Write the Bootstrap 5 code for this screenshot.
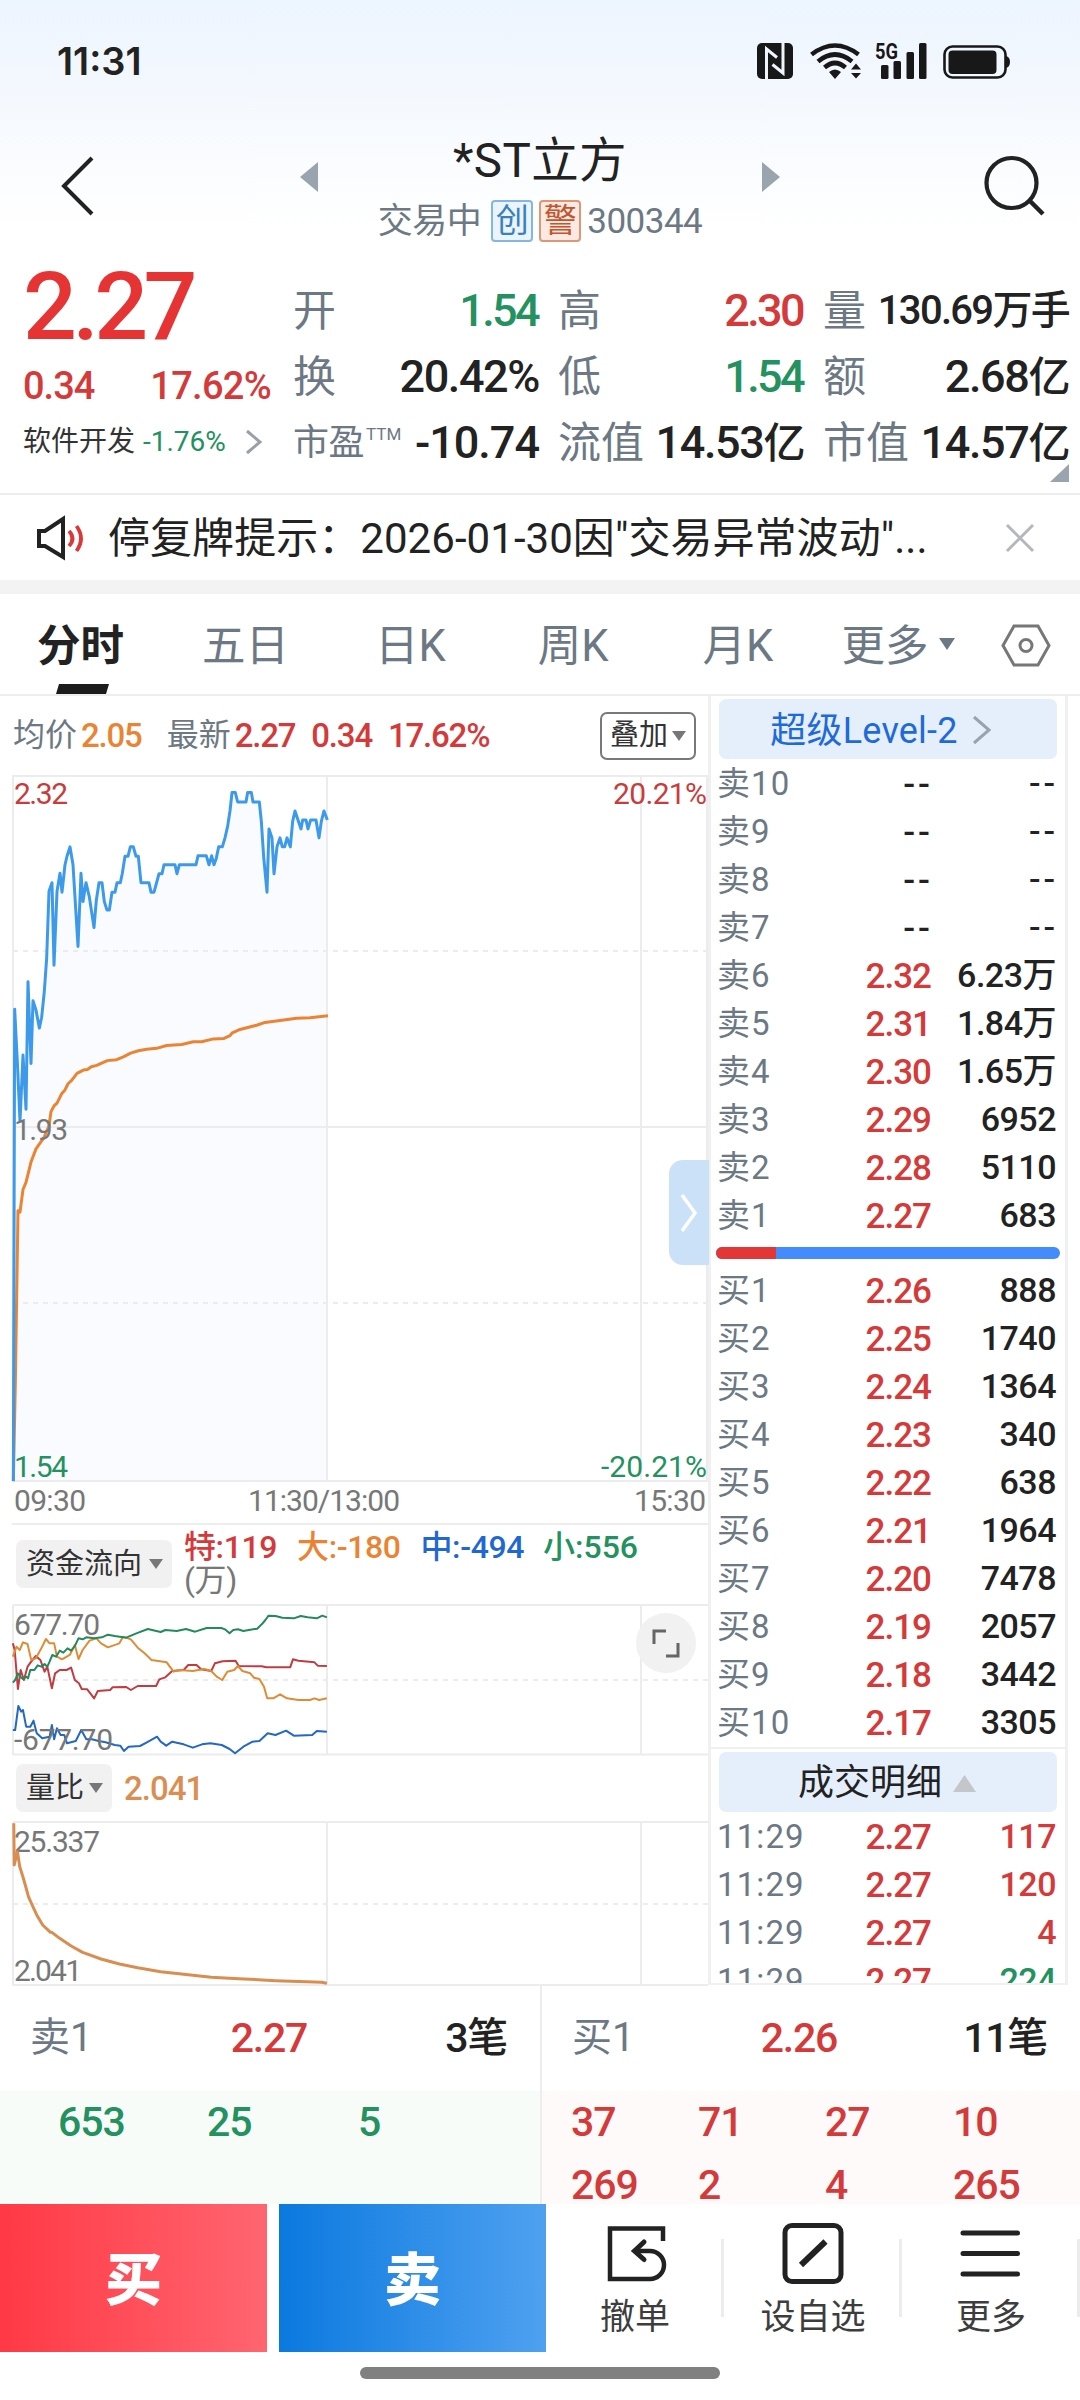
<!DOCTYPE html>
<html lang="zh-CN">
<head>
<meta charset="utf-8">
<title>*ST立方 300344</title>
<meta name="viewport" content="width=device-width, initial-scale=1">
<link href="https://cdn.jsdelivr.net/npm/bootstrap@5.3.0/dist/css/bootstrap.min.css" rel="stylesheet">
<script src="https://cdn.jsdelivr.net/npm/bootstrap@5.3.0/dist/js/bootstrap.bundle.min.js"></script>
<style>
:root{--up:#d43a3a;--down:#239160;--ink:#222;--mute:#6c7884;--line:#ededee}
body{width:1080px;height:2400px;margin:0;overflow:hidden;background:#fff;color:var(--ink);font-family:Roboto,"Noto Sans CJK SC",sans-serif;line-height:1;white-space:nowrap}
svg{display:block;flex:none;overflow:visible}
.up{color:var(--up)}.down{color:var(--down)}.mute{color:var(--mute)}
.num{font-weight:500}
.top-zone{height:260px;background:linear-gradient(#edf5ff,#f4f8fe 35%,#fff 88%)}
.status{height:122px;padding:0 69px 0 57px}
.clock{font:600 38px/123px Inter,Roboto,sans-serif;letter-spacing:0}
.title-bar{height:138px;padding:0 33px 0 60px}
.title-bar>svg{margin-top:33px}
.next-stock+svg{margin-left:203px}
.prev-stock{margin-left:204px}
.stock-name{font-size:47.5px;line-height:60px;margin-top:9px;letter-spacing:.4px}
.stock-sub{font-size:35px;height:44px;margin-top:8px;letter-spacing:-.5px}
.tagbox{width:42px;height:42px;border:2px solid;border-radius:4px;font-size:33px;line-height:37px;text-align:center;letter-spacing:0}
.tag-c{color:#3a80bb;border-color:#86b5dd;background:#e9f4fd;margin-left:10px}
.tag-w{color:#c2542e;border-color:#dc9678;background:#fce9e1;margin:0 6px 0 6px}
.quote{height:235px;border-bottom:2px solid var(--line);position:relative}
.q-left{width:293px;padding-left:23px}
.big{font-size:95px;height:92px;line-height:94px;color:#e63434;letter-spacing:-4.6px;font-weight:500}
.chg{font-size:38px;height:62px;line-height:69px;letter-spacing:-1px;padding-right:22px}
.chg span+span{letter-spacing:-.7px}
.sector{font-size:28px;height:50px;line-height:50px;margin-top:3px;color:#333}
.q-grid{display:grid;grid-template-columns:246px 246px 246px;column-gap:19px;grid-auto-rows:66px;padding-top:18px}
.q-grid>div{font-size:43px;line-height:66px;display:flex;justify-content:space-between}
.q-grid .num{font-size:45px;letter-spacing:-1.4px}
.q-grid .num.up,.q-grid .num.down{letter-spacing:-2.6px;margin-right:1px}
.q-grid .num b{font-weight:500;font-size:42px}
.q-grid .num.sm{font-size:40px;letter-spacing:-1.7px}
.q-grid .num.neg{letter-spacing:-1px}
.q-grid .pe{font-size:36px;letter-spacing:-.5px}
.q-grid .pe sup{font-size:17px;top:-.9em;margin-left:2px;letter-spacing:0}
.corner{position:absolute;right:11px;bottom:11px}
.notice{height:85px;padding-left:36px;font-size:42px}
.notice span{margin:2px 0 0 23px;letter-spacing:.05px}
.band{height:14px;background:#f3f3f4}
.tabs{height:102px;border-bottom:2px solid var(--line);font-size:43.5px;padding-left:37px;color:var(--mute)}
.tabs>*{line-height:105px}
.tab-on{color:var(--ink);font-weight:700;position:relative}
.tab-on svg{position:absolute;left:19px;bottom:0}
.t2{margin-left:78px}.t3{margin-left:86px}.t4{margin-left:92px}.t5{margin-left:94px}.t6{margin-left:68px}
.body-zone{height:1289px}
.chart-col{width:708px;padding-left:12px}
.avg{height:79px;font-size:32px;line-height:79px;padding-left:1px}
.avg .num{font-size:33px;letter-spacing:-1.2px}
.pick{border:2px solid #77797c;border-radius:7px;height:48px;width:96px;font-size:29px;color:#333;margin-right:12px}
.pick-gray{background:#f1f1f1;border-radius:7px;height:48px;font-size:29px;color:#333;margin-left:4px;padding:0 9px 0 10px}
.flow{height:81px;border-top:2px solid var(--line)}
.flow-vals{font-size:32px;line-height:33px;margin:6px 0 0 12px;letter-spacing:-.4px}
.c-or{color:#ea8433}.c-bl{color:#1f68d2}
.chart-svg text{font-size:30px;font-family:Roboto,sans-serif}
.flap{position:absolute;right:-1px;top:385px;width:40px;height:105px;background:#cbe1f7;border-radius:14px 0 0 14px}
.fullbtn{position:absolute;right:12px;top:9px;width:60px;height:60px;border-radius:50%;background:#f1f1f2}
.book{width:360px;border-left:3px solid #f0f0f1;border-right:3px solid #f0f0f1;border-bottom:2px solid #f0f0f1;overflow:hidden}
.lv{height:60px;margin:3px 8px 0 8px;background:#e5effc;border-radius:7px;font-size:36px}
.lv.l2{color:#1f6ad8;padding:3px 14px 0 0;letter-spacing:.2px}
.lv.deal{font-size:36px;padding:2px 2px 0 0}
.bk{display:flex;height:48px;line-height:49px;font-size:33px;padding:0 9px 0 6px}
.bk .n{width:110px;color:var(--mute);letter-spacing:1.1px}
.bk .p{width:104px;text-align:right;font-weight:500;font-size:35px;letter-spacing:-1px;padding-top:1px}
.bk .v{flex:1;text-align:right;font-weight:500;font-size:34px;letter-spacing:-.5px}
.bk .dash{letter-spacing:3px!important;margin-right:-2px}
.bk .p.dash{width:106px}
#bids{margin-bottom:1px}
.press{height:12px;margin:8px 5px 7px 5px;border-radius:6px;background:#448cfb;overflow:hidden}
.press div{height:12px;width:60px;background:#e33636}
.queue{width:540px;height:219px}
.queue+.queue{border-left:2px solid var(--line)}
.q-head{height:106px;font-size:40px;line-height:106px;padding:0 33px 0 30px}
.q-head .num{font-size:41px;letter-spacing:-1.3px}
.q-cells{height:113px;overflow:hidden;display:grid;font-size:41px;letter-spacing:-1px;line-height:63px;grid-auto-rows:63px;font-weight:500}
.q-sell{background:#f8fcf9;color:var(--down);grid-template-columns:149px 151px 150px;padding-left:58px}
.q-buy{background:#fffafa;color:var(--up);grid-template-columns:127px 127px 128px 120px;padding-left:29px}
.acts{height:148px}
.trade{width:267px;height:148px;line-height:154px;font-size:57px;font-weight:900;color:#fff;border:0;border-radius:0;padding:0}
.t-buy{background:linear-gradient(90deg,#ff3945,#ff6570)}
.t-sell{background:linear-gradient(90deg,#0b79df,#4fa1f0);margin-left:12px}
.tool{width:178px;height:148px;font-size:35px;color:#3d3d3d;position:relative;padding-top:18px}
.tool::after{content:"";position:absolute;right:0;top:35px;width:3px;height:78px;background:#ececed}
.tool div{margin-top:14px;line-height:40px}
.homebar{width:360px;height:12px;border-radius:6px;background:#808080;margin:15px auto 0}
</style>
</head>
<body>
<header class="top-zone">
  <div class="status d-flex align-items-center">
    <span class="clock me-auto">11:31</span>
    <svg width="255" height="40" viewBox="756 42 255 40">
      <rect x="757" y="44" width="36" height="36" rx="5" fill="#181818"/>
      <path d="M766.500 80V50L777 58.500M783 44V74L772.500 65.500" fill="none" stroke="#eff5fd" stroke-width="3"/>
      <g fill="none" stroke="#181818" stroke-width="4.6"><path d="M811.500 55.500Q835 37.500 858.500 55.500"/><path d="M818 62.500Q835 48.500 852 62.500"/><path d="M824.500 68.500Q835 59.500 845.500 68.500"/></g>
      <path d="M835 80l-6-7q6-5 12 0zM856 64.500l5 6h-10zM856 79.500l5-5.500h-10z" fill="#181818"/>
      <text x="875" y="59.500" font-size="22" font-weight="700" textLength="23" lengthAdjust="spacingAndGlyphs" fill="#181818">5G</text>
      <g fill="#181818"><rect x="881" y="66" width="7.500" height="14" rx="1.500"/><rect x="893.500" y="62" width="7.500" height="18" rx="1.500"/><rect x="906.500" y="53" width="7.500" height="27" rx="1.500"/><rect x="919" y="44" width="7.500" height="36" rx="1.500"/></g>
      <rect x="944.500" y="47.500" width="61" height="31" rx="8" fill="none" stroke="#181818" stroke-width="2.600"/>
      <rect x="948.500" y="51.500" width="48" height="23.500" rx="4" fill="#181818"/><path d="M1006 57q4 1 4 6t-4 6z" fill="#181818"/>
    </svg>
  </div>
  <div class="title-bar d-flex">
    <svg width="36" height="62" viewBox="0 0 36 62"><path d="M32 3L4 31 32 59" fill="none" stroke="#222" stroke-width="4"/></svg>
    <svg class="prev-stock" width="18" height="70" viewBox="0 0 18 70"><path d="M18 7v30L0 22z" fill="#9aa4ae"/></svg>
    <div class="flex-fill d-flex flex-column align-items-center">
      <div class="stock-name">*ST立方</div>
      <div class="stock-sub mute d-flex align-items-center"><span>交易中</span><span class="tagbox tag-c">创</span><span class="tagbox tag-w">警</span><span>300344</span></div>
    </div>
    <svg class="next-stock" width="18" height="70" viewBox="0 0 18 70"><path d="M0 7v30L18 22z" fill="#9aa4ae"/></svg>
    <svg width="64" height="62" viewBox="0 0 64 62"><circle cx="28.500" cy="28" r="25" fill="none" stroke="#222" stroke-width="4.200"/><path d="M47 46L60 59" stroke="#222" stroke-width="4.500"/></svg>
  </div>
</header>

<section class="quote d-flex">
  <div class="q-left">
    <div class="big">2.27</div>
    <div class="chg num up d-flex justify-content-between"><span>0.34</span><span>17.62%</span></div>
    <div class="sector d-flex align-items-center"><span>软件开发</span><span class="down" style="margin-left:8px">-1.76%</span>
      <svg style="margin-left:19px" width="18" height="26" viewBox="0 0 18 26"><path d="M2 2l13 11L2 24" fill="none" stroke="#9aa0a7" stroke-width="3"/></svg></div>
  </div>
  <div class="q-grid">
    <div><span class="mute">开</span><span class="num down">1.54</span></div>
    <div><span class="mute">高</span><span class="num up">2.30</span></div>
    <div><span class="mute">量</span><span class="num sm">130.69万手</span></div>
    <div><span class="mute">换</span><span class="num">20.42%</span></div>
    <div><span class="mute">低</span><span class="num down">1.54</span></div>
    <div><span class="mute">额</span><span class="num">2.68<b>亿</b></span></div>
    <div><span class="mute pe">市盈<sup>TTM</sup></span><span class="num neg">-10.74</span></div>
    <div><span class="mute">流值</span><span class="num">14.53<b>亿</b></span></div>
    <div><span class="mute">市值</span><span class="num">14.57<b>亿</b></span></div>
  </div>
  <svg class="corner" width="19" height="18"><path d="M19 0v18H0z" fill="#9aa4ae"/></svg>
</section>

<section class="notice d-flex align-items-center">
  <svg width="49" height="46" viewBox="0 0 49 46"><path d="M27 4V42L9 31H3V16H9z" fill="none" stroke="#222" stroke-width="4"/><path d="M33 16q7 7.500 0 15M40.500 11q9 12.500 0 25" fill="none" stroke="#dc3838" stroke-width="3.800"/></svg>
  <span>停复牌提示：2026-01-30因"交易异常波动"...</span>
  <svg class="ms-auto" style="margin-right:45px" width="30" height="30"><path d="M2 2l26 26M28 2L2 28" stroke="#b4b8bd" stroke-width="3"/></svg>
</section>
<div class="band"></div>

<nav class="tabs d-flex">
  <div class="tab-on">分时<svg width="53" height="10"><path d="M3 0h50l-3 10H0z" fill="#1c1c1c"/></svg></div>
  <div class="t2">五日</div>
  <div class="t3">日K</div>
  <div class="t4">周K</div>
  <div class="t5">月K</div>
  <div class="t6">更多</div>
  <svg style="margin:44px 0 0 11px" width="16" height="12"><path d="M0 0h16l-8 12z" fill="#6c7884"/></svg>
  <svg style="margin:29px 0 0 46px" width="50" height="45" viewBox="0 0 50 45"><path d="M13 3h24l11 19.500L37 42H13L2 22.500z" fill="none" stroke="#777" stroke-width="3"/><circle cx="25" cy="22.500" r="6" fill="none" stroke="#777" stroke-width="3"/></svg>
</nav>

<main class="body-zone d-flex">
  <div class="chart-col">
    <div class="avg mute d-flex align-items-center"><span>均价</span><span class="num c-or" style="margin-left:4px">2.05</span><span style="margin-left:25px">最新</span><span class="num up" style="margin-left:4px;word-spacing:9px">2.27 0.34 17.62%</span>
      <div class="pick ms-auto d-flex align-items-center justify-content-center">叠加<svg class="ms-1" width="14" height="10"><path d="M0 0h14L7 10z" fill="#777"/></svg></div></div>
    <div class="position-relative">
      <svg class="chart-svg" width="696" height="748" viewBox="12 775 696 748">
        <g transform="translate(0 760) scale(.33333 .47194)">
          <path id="priceArea" fill="#f9fbff"/>
        </g>
        <g fill="none" stroke="#ececee" stroke-width="2"><path d="M13 776H708M13 1481H708M13 1127H708M13 775V1481M327 775V1481M641 775V1481M707 775V1481"/><path d="M13 951H708M13 1303H708" stroke-dasharray="5 5"/></g>
        <g transform="translate(0 760) scale(.33333 .47194)" fill="none" stroke-linejoin="round">
          <polyline vector-effect="non-scaling-stroke" stroke="#ea8433" stroke-width="3" points="40,1528 46,1320 54,955 60,958 69,910 78,895 93,852 108,824 120,812 132,800 147,775 153,745 162,733 171,727 186,706 195,699 204,686 215,679 231,664 250,657 262,656 274,650 290,647 322,637 350,635 370,629 392,621 415,616 440,613 470,611 500,605 545,603 580,597 605,597 640,591 672,590 690,584 697,578 720,571 770,562 795,556 840,552 890,547 930,546 984,542"/>
          <polyline id="priceLine" vector-effect="non-scaling-stroke" stroke="#3d9aea" stroke-width="3" points="40,1528 44,528 52,640 60,765 69,625 78,740 84,470 93,643 99,510 108,530 118,568 125,545 133,490 140,420 147,278 156,260 162,435 171,278 180,240 186,280 195,222 201,204 210,184 219,222 234,395 243,240 249,300 258,260 268,290 282,355 289,297 297,260 306,260 313,300 321,318 328,318 336,280 345,280 351,260 361,260 367,240 375,204 384,204 391,184 400,184 408,204 415,204 423,260 447,260 453,280 462,280 469,262 477,241 486,241 492,222 525,222 531,241 538,222 588,222 594,203 619,203 627,222 635,203 642,222 649,208 656,184 667,184 675,165 683,140 690,108 696,69 706,69 713,89 738,89 743,69 754,69 759,89 778,89 784,130 791,205 801,280 807,146 816,165 822,241 831,184 840,165 847,184 854,184 861,165 871,184 878,130 885,108 894,127 903,146 908,127 918,127 924,146 932,127 948,127 957,165 964,130 972,108 982,127"/>
        </g>
        <text x="14" y="804" textLength="54" fill="#c83c3c">2.32</text><text x="613" y="804" textLength="94" fill="#c83c3c">20.21%</text>
        <text x="14" y="1140" textLength="54" fill="#777">1.93</text>
        <text x="14" y="1477" textLength="54" fill="#239160">1.54</text><text x="601" y="1477" textLength="106" fill="#239160">-20.21%</text>
        <text x="14" y="1511" textLength="72" fill="#777">09:30</text><text x="248" y="1511" textLength="152" fill="#777">11:30/13:00</text><text x="634" y="1511" textLength="72" fill="#777">15:30</text>
      </svg>
      <div class="flap d-flex align-items-center justify-content-center"><svg width="20" height="42"><path d="M3 3l13 18L3 39" fill="none" stroke="#fff" stroke-width="3.500"/></svg></div>
    </div>
    <div class="flow d-flex">
      <div class="pick-gray d-flex align-items-center" style="margin-top:15px">资金流向<svg style="margin-left:7px" width="14" height="10"><path d="M0 0h14L7 10z" fill="#777"/></svg></div>
      <div class="flow-vals num"><span class="up">特:119</span><span class="c-or" style="margin-left:20px">大:-180</span><span class="c-bl" style="margin-left:20px">中:-494</span><span class="down" style="margin-left:19px;letter-spacing:0">小:556</span><br><span style="color:#777;font-weight:400">(万)</span></div>
    </div>
    <div class="position-relative">
      <svg class="chart-svg" width="696" height="151" viewBox="12 1604 696 151">
        <g fill="none" stroke="#ececee" stroke-width="2"><path d="M13 1605H708M13 1754.500H708M13 1605V1755M327 1605V1755M641 1605V1755"/><path d="M13 1680H708" stroke-dasharray="5 5"/></g>
        <g transform="translate(0 1480) scale(.45914 .33333)" fill="none" stroke-linejoin="round" stroke-width="2">
          <polyline vector-effect="non-scaling-stroke" stroke="#c33a40" points="28,490 32,510 39,627 45,570 52,600 60,560 68,545 78,528 88,540 97,575 103,560 113,625 120,580 130,570 145,570 155,563 163,600 172,610 178,627 190,628 205,655 213,633 240,630 245,622 275,621 285,630 300,618 340,618 347,598 360,592 375,573 400,570 410,555 428,555 438,568 460,573 468,550 485,544 513,542 520,558 570,559 580,562 632,562 638,538 650,542 685,547 692,557 712,558"/>
          <polyline vector-effect="non-scaling-stroke" stroke="#e08b35" points="28,530 36,500 43,510 50,487 60,492 68,540 78,535 90,505 100,477 108,490 118,490 124,530 135,538 152,525 163,495 171,537 180,510 195,482 210,475 220,490 235,502 260,490 268,470 285,478 300,503 315,520 330,540 363,547 378,575 390,570 420,573 445,567 460,573 472,590 484,600 495,575 510,570 518,558 528,573 545,580 553,593 565,597 575,620 582,655 595,655 610,643 625,655 650,660 675,660 685,655 695,660 712,655"/>
          <polyline vector-effect="non-scaling-stroke" stroke="#238a5c" points="28,608 33,600 39,580 44,590 50,597 57,590 61,595 66,570 75,570 82,556 90,560 97,552 103,560 108,545 114,525 122,530 130,512 138,518 147,505 155,512 163,498 171,475 180,478 188,472 205,475 222,472 235,464 250,468 275,473 297,460 322,447 338,452 350,456 360,450 385,453 405,447 425,455 450,444 482,444 490,448 500,460 508,450 518,448 530,453 545,449 560,446 570,433 578,420 585,407 600,408 615,413 640,415 655,408 670,412 690,415 702,407 712,412"/>
          <polyline vector-effect="non-scaling-stroke" stroke="#2268c4" points="28,750 33,750 40,678 46,695 50,690 57,740 66,740 73,722 80,760 92,775 108,770 113,735 118,778 124,745 132,765 140,765 146,790 165,783 177,750 188,778 200,778 215,783 230,787 250,795 262,797 270,813 280,800 305,798 320,787 342,770 350,785 362,797 375,785 400,793 420,803 440,793 458,790 483,795 500,807 512,820 530,800 550,785 565,783 583,760 600,765 623,752 640,767 680,765 690,753 712,755"/>
        </g>
        <text x="14" y="1635" textLength="86" fill="#777">677.70</text><text x="14" y="1750" textLength="99" fill="#777">-677.70</text>
      </svg>
      <div class="fullbtn"><svg width="60" height="60"><path d="M18 31V18H30M30 43H42V30" fill="none" stroke="#666" stroke-width="3"/></svg></div>
    </div>
    <div class="d-flex align-items-center" style="height:66px"><div class="pick-gray d-flex align-items-center">量比<svg style="margin-left:5px" width="14" height="10"><path d="M0 0h14L7 10z" fill="#777"/></svg></div><span class="num" style="margin-left:12px;font-size:33px;letter-spacing:-1px;color:#db8e51">2.041</span></div>
    <svg class="chart-svg" width="696" height="165" viewBox="12 1821 696 165">
      <g fill="none" stroke="#ececee" stroke-width="2"><path d="M13 1822H708M12 1985H708M13 1822V1985M327 1822V1985M641 1822V1985"/><path d="M13 1904H708" stroke-dasharray="5 5"/></g>
      <text x="14" y="1852" textLength="86" fill="#777">25.337</text><text x="14" y="1981" textLength="68" fill="#777">2.041</text>
      <g transform="translate(0 1480) scale(.45914 .33333)"><polyline vector-effect="non-scaling-stroke" fill="none" stroke="#d98d50" stroke-width="3" stroke-linejoin="round" points="30,1030 31,1155 38,1115 43,1160 52,1200 62,1250 70,1275 80,1305 93,1335 110,1357 113,1357 130,1375 155,1398 180,1417 220,1437 260,1452 300,1463 350,1475 400,1483 460,1492 520,1496 600,1502 700,1507 712,1510"/></g>
    </svg>
  </div>
  <aside class="book">
    <div class="lv l2 d-flex align-items-center justify-content-center">超级Level-2<svg style="margin-left:14px" width="20" height="30"><path d="M2 1l15 13L2 27" fill="none" stroke="#9aa3ad" stroke-width="3"/></svg></div>
    <div id="asks"></div>
    <div class="press"><div></div></div>
    <div id="bids"></div>
    <div style="border-top:2px solid #f0f0f1"></div>
    <div class="lv deal d-flex align-items-center justify-content-center">成交明细<svg style="margin-left:11px" width="23" height="17"><path d="M11.500 0L23 17H0z" fill="#c4c6c9"/></svg></div>
    <div id="ticks"></div>
  </aside>
</main>

<section class="d-flex">
  <div class="queue">
    <div class="q-head d-flex justify-content-between"><span class="mute">卖1</span><span class="num up">2.27</span><span class="num">3笔</span></div>
    <div class="q-cells q-sell"><span>653</span><span>25</span><span>5</span></div>
  </div>
  <div class="queue">
    <div class="q-head d-flex justify-content-between"><span class="mute">买1</span><span class="num up">2.26</span><span class="num">11笔</span></div>
    <div class="q-cells q-buy"><span>37</span><span>71</span><span>27</span><span>10</span><span>269</span><span>2</span><span>4</span><span>265</span></div>
  </div>
</section>
<footer>
  <div class="acts d-flex">
    <button class="trade t-buy">买</button><button class="trade t-sell">卖</button>
    <div class="tool d-flex flex-column align-items-center"><svg width="62" height="62" viewBox="0 0 62 62"><path d="M59 19V6.500H6V57H46A14 14 0 0 0 46 29H31" fill="none" stroke="#222" stroke-width="4.500"/><path d="M40 20L30.500 29 40 37.500" fill="none" stroke="#222" stroke-width="5" stroke-linecap="round"/></svg><div>撤单</div></div>
    <div class="tool d-flex flex-column align-items-center"><svg width="62" height="62" viewBox="0 0 62 62"><rect x="3" y="3.500" width="56" height="56" rx="7" fill="none" stroke="#222" stroke-width="5"/><path d="M19 43L43.500 19.500" stroke="#222" stroke-width="6"/></svg><div>设自选</div></div>
    <div class="tool d-flex flex-column align-items-center"><svg width="62" height="62" viewBox="0 0 62 62"><path d="M3 11H57.500M3 31.500H57.500M3 52H57.500" stroke="#222" stroke-width="5" stroke-linecap="round"/></svg><div>更多</div></div>
  </div>
  <div class="homebar"></div>
</footer>
<script>
const dash = s => s === '--' ? ' dash' : '';
const row = (n, p, v, pc = 'up', vc = '') => `<div class="bk"><span class="n">${n}</span><span class="p ${pc}${dash(p)}">${p}</span><span class="v ${vc}${dash(v)}">${v}</span></div>`;
const asks = [['--','--'],['--','--'],['--','--'],['--','--'],['2.32','6.23万'],['2.31','1.84万'],['2.30','1.65万'],['2.29','6952'],['2.28','5110'],['2.27','683']];
const bids = [['2.26','888'],['2.25','1740'],['2.24','1364'],['2.23','340'],['2.22','638'],['2.21','1964'],['2.20','7478'],['2.19','2057'],['2.18','3442'],['2.17','3305']];
const ticks = [['117','up'],['120','up'],['4','up'],['224','down']];
document.getElementById('asks').innerHTML = asks.map((a, i) => row('卖' + (10 - i), a[0], a[1], a[0] === '--' ? '' : 'up')).join('');
document.getElementById('bids').innerHTML = bids.map((b, i) => row('买' + (i + 1), b[0], b[1])).join('');
document.getElementById('ticks').innerHTML = ticks.map(t => row('11:29', '2.27', t[0], 'up', t[1])).join('');
document.getElementById('priceArea').setAttribute('d', 'M' + document.getElementById('priceLine').getAttribute('points') + ' 982,1528z');
</script>
</body>
</html>
